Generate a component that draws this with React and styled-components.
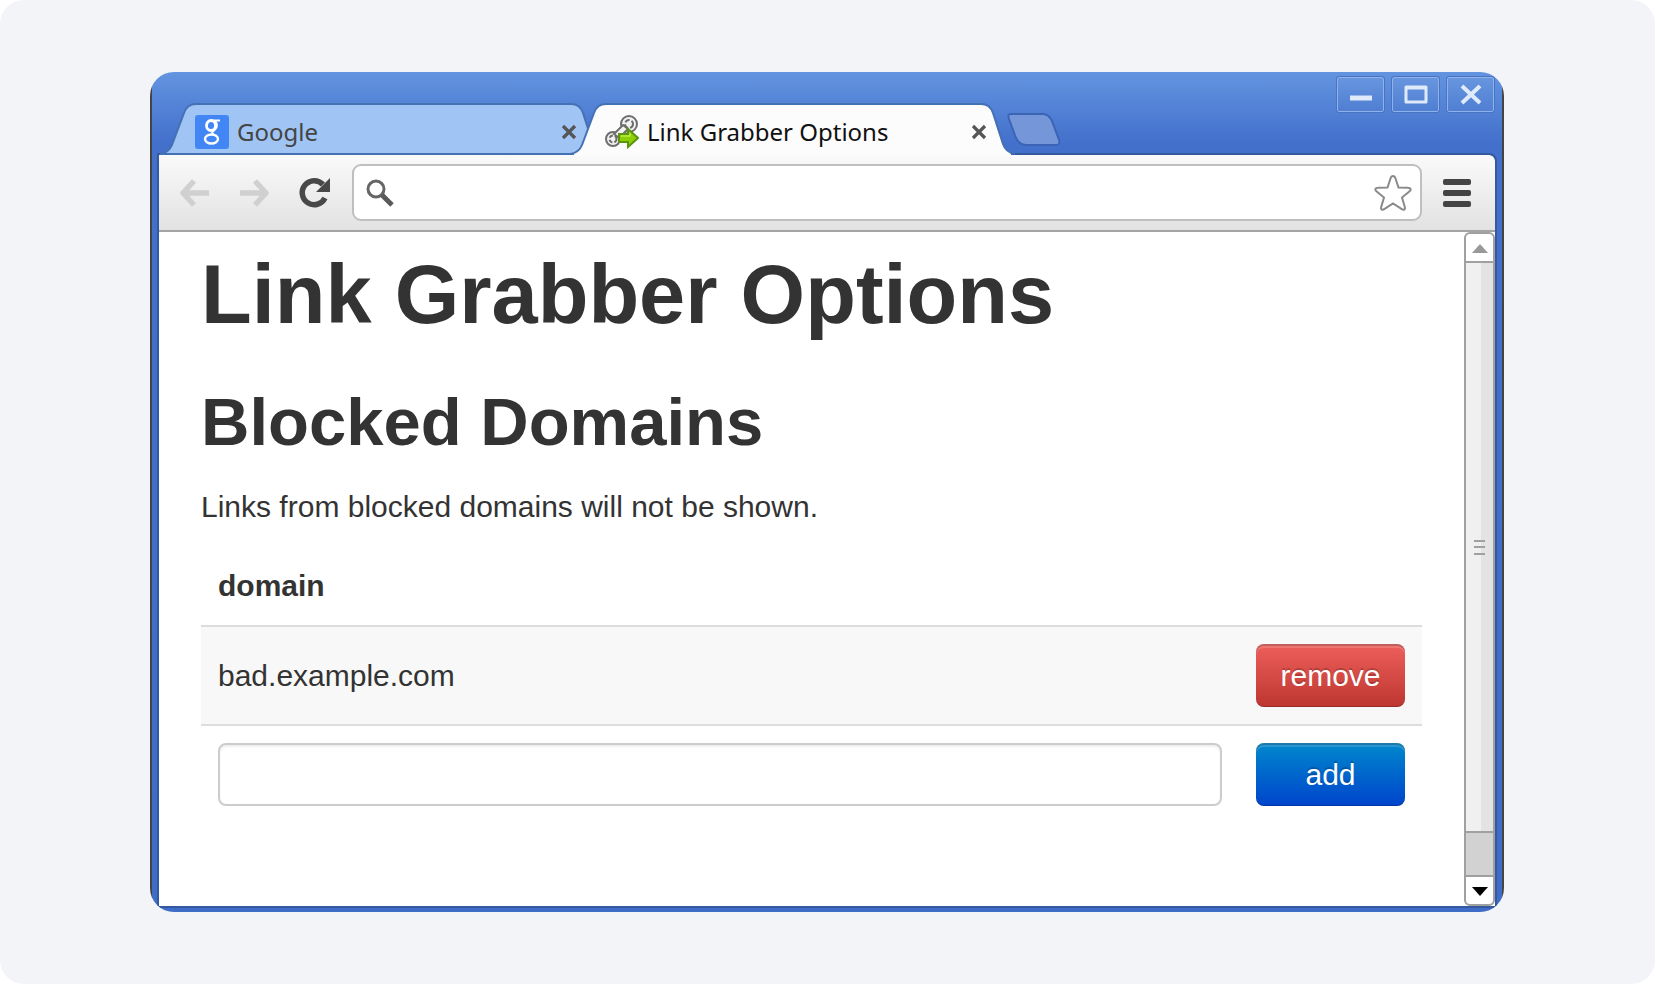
import React, { useState } from "react";
import styled, { createGlobalStyle, css } from "styled-components";

const GlobalStyle = createGlobalStyle`
  * {
    box-sizing: border-box;
  }

  body {
    margin: 0;
    background-color: #fff;
    color: #333;
    font-family: "Liberation Sans", Arial, sans-serif;
    font-size: 30px;
    line-height: 44px;
  }

  button {
    font: inherit;
    cursor: pointer;
  }
`;

function GoogleIcon() {
  return (
    <svg width="34" height="34" viewBox="0 0 34 34" aria-hidden="true">
      <rect width="34" height="34" rx="3" fill="#4285f4" />
      <g fill="none" stroke="#fff">
        <ellipse cx="16" cy="10.500" rx="4.500" ry="5" strokeWidth="2.800" />
        <path d="M16 5.500h9" strokeWidth="2" />
        <path d="M20 6c2.500 3 2.500 6 0 8.500-2.500 2-4 3.500-1.500 5" strokeWidth="2" />
        <ellipse cx="16.500" cy="24" rx="6.500" ry="4.500" strokeWidth="2.400" />
      </g>
    </svg>
  );
}

function LinkGrabberIcon() {
  return (
    <svg width="34" height="34" viewBox="0 0 34 34" aria-hidden="true">
      <g fill="#f2f2f2" stroke="#6e6e6e" strokeWidth="2">
        <circle cx="24" cy="9" r="8" />
        <circle cx="8" cy="24" r="7" />
        <path d="M18 10l5 4-9 9-5-4z" />
      </g>
      <g fill="none" stroke="#6c6c6c" strokeWidth="2">
        <circle cx="24" cy="9" r="4" strokeDasharray="5 2" />
        <circle cx="8" cy="24" r="3.500" strokeDasharray="4 2" />
      </g>
      <path
        d="M14 19h9v-5l10 9-10 9v-5h-9z"
        fill="#8ed007"
        stroke="#5c9410"
        strokeWidth="2"
      />
      <path d="M16 21h9v-3" fill="none" stroke="#b9ea4a" strokeWidth="1.500" />
    </svg>
  );
}

function CloseIcon() {
  return (
    <svg width="16" height="16" viewBox="0 0 16 16" aria-hidden="true">
      <path d="M2 2l12 12M14 2L2 14" stroke="currentColor" strokeWidth="3.200" />
    </svg>
  );
}

function ArrowIcon({ flip }) {
  return (
    <svg width="32" height="30" viewBox="0 0 32 30" aria-hidden="true">
      <path
        d={flip ? "M2 15h25M17 3l11 12-11 12" : "M30 15H5M15 3L4 15l11 12"}
        fill="none"
        stroke="#d0d0d0"
        strokeWidth="5.500"
        strokeLinejoin="round"
      />
    </svg>
  );
}

function ReloadIcon() {
  return (
    <svg width="34" height="32" viewBox="0 0 34 32" aria-hidden="true">
      <path
        d="M26 7.500A12 12 0 1 0 28 21"
        fill="none"
        stroke="#484848"
        strokeWidth="5.500"
      />
      <path d="M33 1v14H19z" fill="#484848" />
    </svg>
  );
}

function SearchIcon() {
  return (
    <svg width="28" height="28" viewBox="0 0 28 28" aria-hidden="true">
      <circle cx="10" cy="10" r="8" fill="none" stroke="#666" strokeWidth="3" />
      <path d="M16 16l10 10" stroke="#5a5a5a" strokeWidth="5" />
    </svg>
  );
}

function StarIcon() {
  return (
    <svg width="38" height="38" viewBox="0 0 38 38" aria-hidden="true">
      <path
        d="M19 2c1.500 0 2 1 2.500 2.500l3 9 9.500.300c3 0 3.500 2 1.300 3.700l-7.300 6 2.800 9.500c.700 2.800-1 3.500-3 2.200L19 29.500l-8.800 5.700c-2 1.300-3.700.600-3-2.200L10 23.500l-7.300-6C.500 15.800 1 13.800 4 13.800l9.500-.300 3-9C17 3 17.500 2 19 2z"
        fill="#fff"
        stroke="#8a8a8a"
        strokeWidth="2"
      />
    </svg>
  );
}

function MenuIcon() {
  return (
    <svg width="28" height="28" viewBox="0 0 28 28" aria-hidden="true">
      <g fill="#444">
        <rect width="28" height="6" rx="2" />
        <rect y="11" width="28" height="6" rx="2" />
        <rect y="22" width="28" height="6" rx="2" />
      </g>
    </svg>
  );
}

const windowIcons = {
  Minimize: <path d="M1 14h22" strokeWidth="5" />,
  Maximize: <path d="M2 3h20v15H2zM2 4h20" strokeWidth="3" strokeLinejoin="round" />,
  Close: <path d="M3 2l18 17M21 2L3 19" strokeWidth="4" />,
};

function Tab({ active, icon, title }) {
  const outline =
    "M0 51C7 50 10 47 12 42L24 10C26 4 30 1 36 1H411C417 1 421 4 423 10L433 41C435 47 439 50 445 51";

  return (
    <TabItem $active={active}>
      <TabShape viewBox="0 0 445 52" preserveAspectRatio="none" $active={active}>
        {active && <rect x="4" y="50" width="437" height="3" stroke="none" />}
        <path d={active ? outline : `${outline}Z`} />
      </TabShape>
      <TabLink href="#" aria-current={active ? "page" : undefined}>
        {icon}
        <TabTitle $active={active}>{title}</TabTitle>
      </TabLink>
      <TabClose aria-label={`Close ${title}`}>
        <CloseIcon />
      </TabClose>
    </TabItem>
  );
}

function App() {
  const [domains, setDomains] = useState(["bad.example.com"]);
  const [value, setValue] = useState("");

  const handleAdd = () => {
    if (!value.trim()) return;
    setDomains([...domains, value.trim()]);
    setValue("");
  };

  const handleRemove = (domain) => {
    setDomains(domains.filter((d) => d !== domain));
  };

  return (
    <>
      <GlobalStyle />
      <Page>
        <BrowserWindow>
          <TitleBar>
            <Tabs>
              <Tab icon={<GoogleIcon />} title="Google" />
              <Tab active icon={<LinkGrabberIcon />} title="Link Grabber Options" />
              <NewTab aria-label="New tab">
                <svg width="54" height="33" viewBox="0 0 54 33">
                  <path
                    d="M4 1H36C41 1 43 4 45 8L52 27C53 30 52 32 49 32H19C14 32 11 29 9 25L2 6C1 3 1 1 4 1z"
                    fill="#7597da"
                    stroke="#3c64b4"
                    strokeWidth="2"
                  />
                </svg>
              </NewTab>
            </Tabs>
            <WindowControls>
              {Object.keys(windowIcons).map((name) => (
                <WindowButton key={name} aria-label={name}>
                  <svg width="24" height="22" viewBox="0 0 24 22">
                    {windowIcons[name]}
                  </svg>
                </WindowButton>
              ))}
            </WindowControls>
          </TitleBar>

          <Frame>
            <Toolbar>
              <NavButtons>
                <IconButton aria-label="Back" disabled>
                  <ArrowIcon />
                </IconButton>
                <IconButton aria-label="Forward" disabled>
                  <ArrowIcon flip />
                </IconButton>
                <IconButton aria-label="Reload">
                  <ReloadIcon />
                </IconButton>
              </NavButtons>
              <AddressBar>
                <SearchIcon />
                <AddressInput aria-label="Address" />
                <IconButton aria-label="Bookmark">
                  <StarIcon />
                </IconButton>
              </AddressBar>
              <IconButton aria-label="Menu">
                <MenuIcon />
              </IconButton>
            </Toolbar>

            <Viewport>
              <Content>
                <Title>Link Grabber Options</Title>
                <Subtitle>Blocked Domains</Subtitle>
                <Description>
                  Links from blocked domains will not be shown.
                </Description>
                <Table>
                  <thead>
                    <tr>
                      <HeadCell colSpan={2}>domain</HeadCell>
                    </tr>
                  </thead>
                  <tbody>
                    {domains.map((domain) => (
                      <tr key={domain}>
                        <Cell $shaded>{domain}</Cell>
                        <Cell $shaded $action>
                          <Button $danger onClick={() => handleRemove(domain)}>
                            remove
                          </Button>
                        </Cell>
                      </tr>
                    ))}
                    <tr>
                      <Cell>
                        <DomainInput
                          aria-label="domain"
                          value={value}
                          onChange={(e) => setValue(e.target.value)}
                        />
                      </Cell>
                      <Cell $action>
                        <Button onClick={handleAdd}>add</Button>
                      </Cell>
                    </tr>
                  </tbody>
                </Table>
              </Content>

              <Scrollbar>
                <ScrollButton aria-label="Scroll up">
                  <svg width="16" height="9" viewBox="0 0 16 9">
                    <path d="M8 0l8 9H0z" fill="#999" />
                  </svg>
                </ScrollButton>
                <ScrollThumb>
                  <svg width="11" height="16" viewBox="0 0 11 16">
                    <path d="M0 2h11M0 8h11M0 15h11" stroke="#a0a0a0" strokeWidth="2" />
                  </svg>
                </ScrollThumb>
                <ScrollTrack />
                <ScrollButton $down aria-label="Scroll down">
                  <svg width="16" height="9" viewBox="0 0 16 9">
                    <path d="M0 0h16L8 9z" fill="#000" />
                  </svg>
                </ScrollButton>
              </Scrollbar>
            </Viewport>
          </Frame>
        </BrowserWindow>
      </Page>
    </>
  );
}

export default App;

const Page = styled.main`
  display: flex;
  min-height: 100vh;
  padding: 72px 151px 72px 150px;
  border-radius: 24px;
  background-color: #f2f4f8;
`;

const BrowserWindow = styled.section`
  flex: 1;
  min-width: 0;
  display: flex;
  flex-direction: column;
  overflow: hidden;
  padding: 0 2px;
  border-radius: 24px;
  background: linear-gradient(#444, #444) left / 2px 100% no-repeat,
    linear-gradient(#444, #444) right / 2px 100% no-repeat,
    linear-gradient(#6394e0, #4270cb 72px, #3e6cc6);
`;

const TitleBar = styled.header`
  display: flex;
  justify-content: space-between;
  height: 83px;
  padding: 0 8px;
`;

const Tabs = styled.nav`
  display: flex;
  align-items: flex-end;
  min-width: 0;
`;

const TabItem = styled.div`
  position: relative;
  display: flex;
  align-items: center;
  width: 445px;
  height: 52px;
  padding: 6px 28px 0 35px;
  margin-right: -35px;
  z-index: ${({ $active }) => ($active ? 2 : 1)};
`;

const TabShape = styled.svg`
  position: absolute;
  inset: 0;
  width: 100%;
  height: 100%;
  overflow: visible;
  stroke: #4470b4;
  stroke-width: 2;
  fill: ${({ $active }) => ($active ? "#fcfcfc" : "#a0c5f4")};
`;

const TabLink = styled.a`
  position: relative;
  flex: 1;
  display: flex;
  align-items: center;
  gap: 8px;
  min-width: 0;
  color: inherit;
  text-decoration: none;
`;

const TabTitle = styled.span`
  color: ${({ $active }) => ($active ? "#111" : "#444")};
  font-family: "Noto Sans", "Open Sans", sans-serif;
  font-size: 24px;
  line-height: 32px;
  white-space: nowrap;
`;

const plainButton = css`
  display: flex;
  align-items: center;
  justify-content: center;
  padding: 0;
  border: none;
  background: none;
`;

const TabClose = styled.button`
  ${plainButton}
  position: relative;
  color: #555;
`;

const NewTab = styled.button`
  ${plainButton}
  margin: 0 0 9px 27px;
`;

const WindowControls = styled.div`
  display: flex;
  gap: 8px;
  padding-top: 5px;
`;

const WindowButton = styled.button`
  ${plainButton}
  width: 47px;
  height: 35px;
  border: 1px solid #8fb2ea;
  border-radius: 2px;
  outline: 1px solid #4a74c0;
  background: linear-gradient(#6795de, #507fd3);

  path {
    fill: none;
    stroke: #dfeafb;
  }
`;

const Frame = styled.div`
  flex: 1;
  display: flex;
  flex-direction: column;
  margin: 0 7px 6px;
  overflow: hidden;
  border-top-right-radius: 6px;
  outline: 2px solid #34599f;
  background-color: #fff;
`;

const Toolbar = styled.div`
  display: flex;
  align-items: center;
  gap: 21px;
  height: 77px;
  padding: 0 24px 0 20px;
  border-bottom: 2px solid #a3a3a3;
  background: linear-gradient(#fafafa, #e2e2e2);
`;

const NavButtons = styled.div`
  display: flex;
  align-items: center;
  gap: 27px;
`;

const IconButton = styled.button`
  ${plainButton}
`;

const AddressBar = styled.div`
  flex: 1;
  display: flex;
  align-items: center;
  min-width: 0;
  height: 57px;
  padding: 0 8px 0 12px;
  border: 2px solid #bfbfbf;
  border-radius: 9px;
  background-color: #fff;
`;

const AddressInput = styled.input`
  flex: 1;
  min-width: 0;
  border: none;
  outline: none;
  background: none;
  font: inherit;
`;

const Viewport = styled.div`
  flex: 1;
  display: flex;
`;

const Content = styled.div`
  flex: 1;
  min-width: 0;
  padding: 19px 42px 40px;
`;

const Title = styled.h1`
  margin: 0 0 39px;
  font-size: 83px;
  line-height: 88px;
`;

const Subtitle = styled.h2`
  margin: 0 0 19px;
  font-size: 67px;
  line-height: 88px;
`;

const Description = styled.p`
  margin: 0 0 18px;
`;

const Table = styled.table`
  width: 100%;
  border-collapse: separate;
  border-spacing: 0;
`;

const HeadCell = styled.th`
  padding: 17px;
  text-align: left;
`;

const Cell = styled.td`
  padding: 17px;
  border-top: 2px solid #ddd;
  background-color: ${({ $shaded }) => ($shaded ? "#f8f8f8" : "#fff")};
  ${({ $action }) => $action && "width: 183px;"}
`;

const DomainInput = styled.input`
  display: block;
  width: 100%;
  height: 63px;
  padding: 8px 12px;
  border: 2px solid #ccc;
  border-radius: 8px;
  box-shadow: inset 0 2px 2px rgba(0, 0, 0, 0.07);
  color: #555;
  font: inherit;
`;

const Button = styled.button`
  display: block;
  width: 100%;
  height: 63px;
  padding: 0;
  border: none;
  border-radius: 8px;
  color: #fff;
  text-shadow: 0 -2px 0 rgba(0, 0, 0, 0.2);
  background: ${({ $danger }) =>
    $danger
      ? "linear-gradient(#ee5f5b, #bd362f)"
      : "linear-gradient(#0088cc, #0044cc)"};
  box-shadow: inset 0 2px 0 rgba(0, 0, 0, 0.2),
    inset 0 4px 0 rgba(255, 255, 255, 0.15),
    inset 0 -1px 0 rgba(0, 0, 0, 0.2);
`;

const Scrollbar = styled.div`
  display: flex;
  flex-direction: column;
  width: 31px;
`;

const ScrollButton = styled.button`
  ${plainButton}
  height: 31px;
  padding-top: 2px;
  border: 2px solid #a0a0a0;
  border-radius: ${({ $down }) => ($down ? "0 0 6px 6px" : "6px 6px 0 0")};
  background-color: #fff;
`;

const ScrollThumb = styled.div`
  flex: 1;
  display: flex;
  align-items: center;
  justify-content: center;
  border: solid #a0a0a0;
  border-width: 0 2px;
  background: linear-gradient(to right, #f0f0f0 55%, #e3e3e3 55%);
`;

const ScrollTrack = styled.div`
  height: 44px;
  border: 2px solid #a0a0a0;
  border-bottom: none;
  background-color: #d2d2d2;
`;
